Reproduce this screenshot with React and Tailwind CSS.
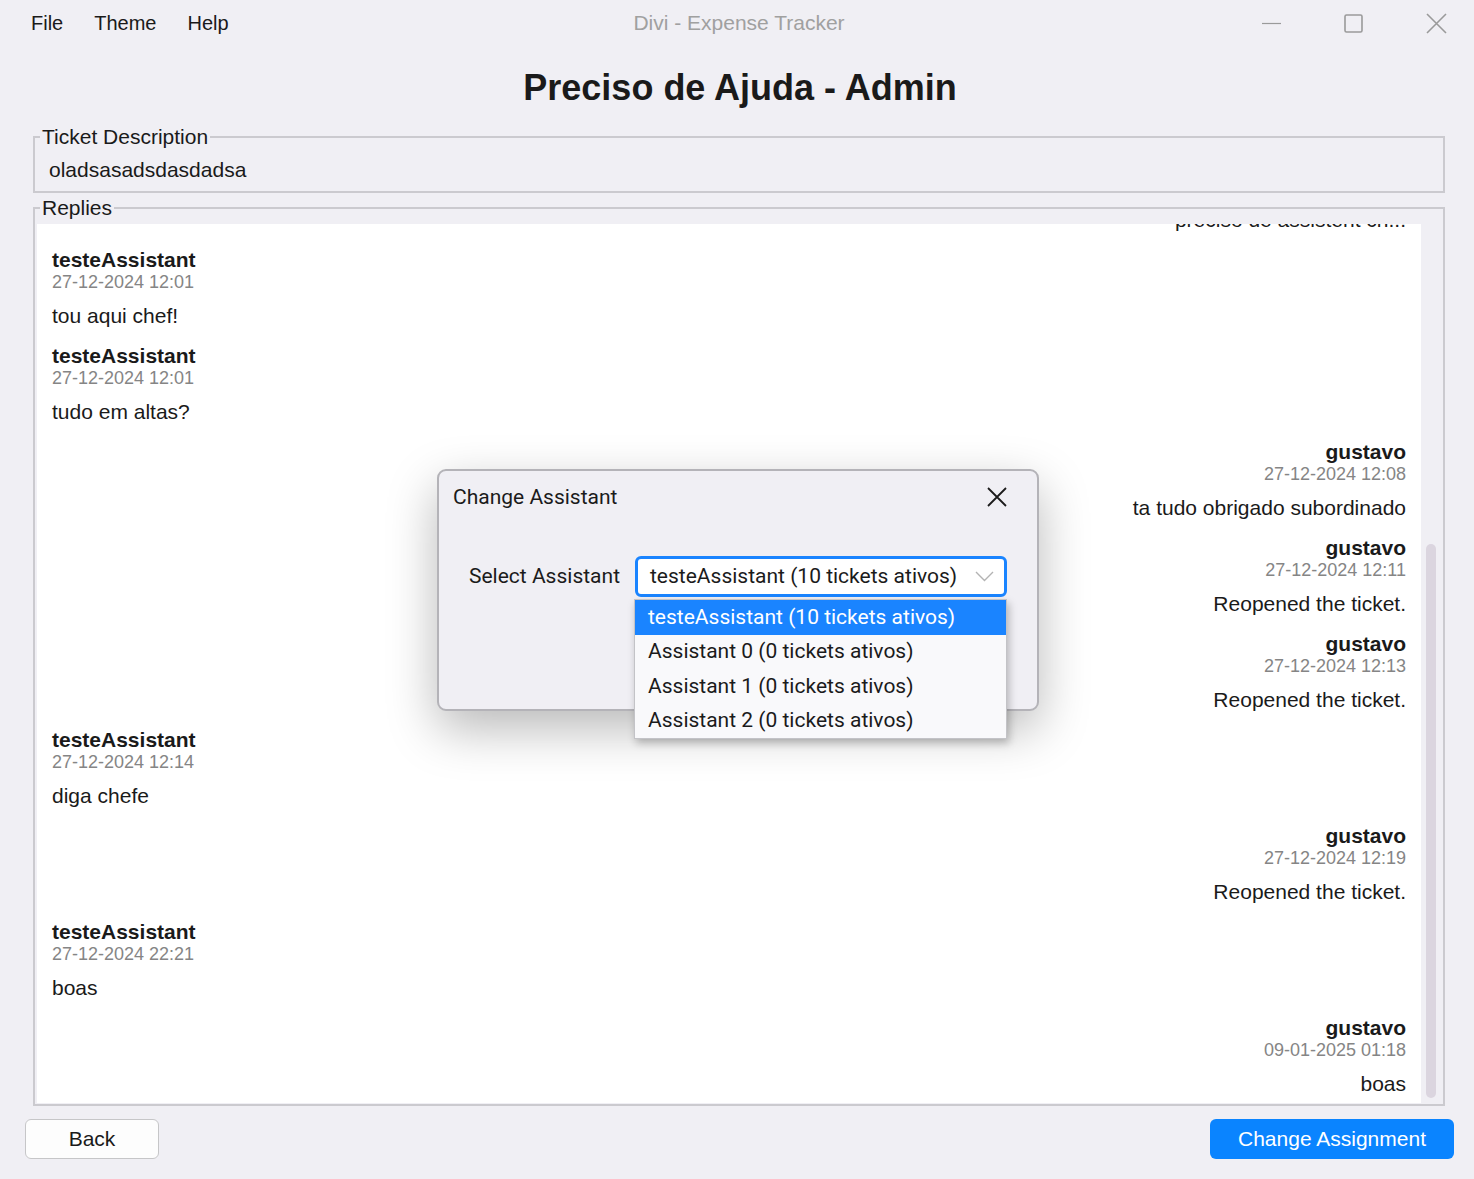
const replies = [
  { side: "L", name: "testeAssistant", date: "27-12-2024 12:01", text: "tou aqui chef!" },
  { side: "L", name: "testeAssistant", date: "27-12-2024 12:01", text: "tudo em altas?" },
  { side: "R", name: "gustavo", date: "27-12-2024 12:08", text: "ta tudo obrigado subordinado" },
  { side: "R", name: "gustavo", date: "27-12-2024 12:11", text: "Reopened the ticket." },
  { side: "R", name: "gustavo", date: "27-12-2024 12:13", text: "Reopened the ticket." },
  { side: "L", name: "testeAssistant", date: "27-12-2024 12:14", text: "diga chefe" },
  { side: "R", name: "gustavo", date: "27-12-2024 12:19", text: "Reopened the ticket." },
  { side: "L", name: "testeAssistant", date: "27-12-2024 22:21", text: "boas" },
  { side: "R", name: "gustavo", date: "09-01-2025 01:18", text: "boas" },
];

const options = [
  "testeAssistant (10 tickets ativos)",
  "Assistant 0 (0 tickets ativos)",
  "Assistant 1 (0 tickets ativos)",
  "Assistant 2 (0 tickets ativos)",
];

const Reply = ({ side, name, date, text }) => {
  return (
    <div className={side === "R" ? "flex flex-col items-end" : "flex flex-col items-start"}>
      <div className="text-[21px] leading-[24px] font-bold">{name}</div>
      <div className="text-[18px] leading-[20px] text-[#858585]">{date}</div>
      <div className="mt-[12px] mb-[16px] text-[21px] leading-[24px]">{text}</div>
    </div>
  );
};

const TitleBar = () => {
  return (
    <div className="h-[46px] grid grid-cols-[1fr_auto_1fr] items-center">
      <div className="flex gap-[31px] pl-[31px] text-[20px]">
        <span>File</span>
        <span>Theme</span>
        <span>Help</span>
      </div>
      <div className="text-[21px] text-[#a0a0a0] pl-[4px]">Divi - Expense Tracker</div>
      <div className="flex justify-end items-center gap-[63px] pr-[27px] text-[#9a9a9a]">
        <svg width="19" height="19" viewBox="0 0 19 19">
          <line x1="0" y1="9.5" x2="19" y2="9.5" stroke="currentColor" strokeWidth="1.2" />
        </svg>
        <svg width="19" height="19" viewBox="0 0 19 19">
          <rect x="1" y="1" width="17" height="17" rx="1.5" fill="none" stroke="currentColor" strokeWidth="1.6" />
        </svg>
        <svg width="21" height="21" viewBox="0 0 21 21">
          <path d="M1 1 L20 20 M20 1 L1 20" stroke="currentColor" strokeWidth="1.6" />
        </svg>
      </div>
    </div>
  );
};

const ChangeAssistantDialog = () => {
  return (
    <div className="absolute left-[437px] top-[469px] w-[602px] h-[242px] rounded-[9px] border-2 border-[#b4b3b8] bg-[#f0eff4] shadow-[0_18px_50px_rgba(0,0,0,0.28)] font-['Roboto',sans-serif] text-[#1b1b1b]">
      <div className="flex items-center justify-between pl-[14px] pr-[30px] pt-[13px]">
        <span className="text-[21px] leading-[26px]">Change Assistant</span>
        <svg width="20" height="20" viewBox="0 0 20 20" className="text-[#1b1b1b]">
          <path d="M1 1 L19 19 M19 1 L1 19" stroke="currentColor" strokeWidth="1.8" />
        </svg>
      </div>
      <div className="flex items-center mt-[46px] pl-[30px]">
        <span className="w-[166px] text-[21px]">Select Assistant</span>
        <div className="relative">
          <div className="w-[372px] h-[41px] rounded-[6px] border-[3px] border-[#1a84ff] bg-white flex items-center justify-between pl-[12px] pr-[10px]">
            <span className="text-[21px]">testeAssistant (10 tickets ativos)</span>
            <svg width="19" height="11" viewBox="0 0 19 11" className="text-[#b3b3b3]">
              <path d="M1 1 L9.5 9.5 L18 1" fill="none" stroke="currentColor" strokeWidth="1.4" />
            </svg>
          </div>
          <div className="absolute left-[-1px] top-[43px] w-[373px] border border-[#c3c3c7] bg-[#f9f9fb] shadow-[2px_4px_8px_rgba(0,0,0,0.25)]">
            {options.map((o, i) => (
              <div
                key={o}
                className={
                  i === 0
                    ? "h-[34.5px] flex items-center pl-[13px] text-[21px] bg-[#1a84ff] text-white"
                    : "h-[34.5px] flex items-center pl-[13px] text-[21px]"
                }
              >
                {o}
              </div>
            ))}
          </div>
        </div>
      </div>
    </div>
  );
};

const App = () => {
  return (
    <div className="relative w-[1474px] h-[1179px] overflow-hidden bg-[#f0eff4] flex flex-col font-['Liberation_Sans',Arial,sans-serif] text-[#1a1a1a]">
      <TitleBar />
      <h1 className="mt-[20px] pl-[6px] text-center text-[36px] leading-[44px] font-bold">Preciso de Ajuda - Admin</h1>

      <fieldset className="mt-[15px] ml-[33px] mr-[29px] border-2 border-[#cbcacf] px-[14px] pb-[9px]">
        <legend className="ml-[-9px] px-[2px] text-[21px] leading-[24px]">Ticket Description</legend>
        <div className="mt-[9px] text-[21px] leading-[24px]">oladsasadsdasdadsa</div>
      </fieldset>

      <fieldset className="mt-[3px] ml-[33px] mr-[29px] border-2 border-[#cbcacf] pl-[2px] pb-[1px]">
        <legend className="ml-[3px] px-[2px] text-[21px] leading-[24px]">Replies</legend>
        <div className="mt-[4px] h-[879px] flex">
          <div className="flex-1 bg-white overflow-hidden px-[15px]">
            <div className="-mt-[16px] mb-[16px] text-right text-[21px] leading-[24px]">preciso de assistent ch...</div>
            {replies.map((r, i) => (
              <Reply key={i} {...r} />
            ))}
          </div>
          <div className="w-[22px] flex flex-col items-start pl-[5px]">
            <div className="mt-[320px] mb-[5px] flex-1 w-[10px] rounded-full bg-[#dbd5df]"></div>
          </div>
        </div>
      </fieldset>

      <div className="flex justify-between items-center mt-[13px] pl-[25px] pr-[20px]">
        <button className="w-[134px] h-[40px] rounded-[6px] border border-[#c6c6c8] bg-[#fdfdfd] text-[21px]">Back</button>
        <button className="w-[244px] h-[40px] rounded-[6px] bg-[#0a84ff] text-white text-[21px]">Change Assignment</button>
      </div>

      <ChangeAssistantDialog />
    </div>
  );
};

export default App;
